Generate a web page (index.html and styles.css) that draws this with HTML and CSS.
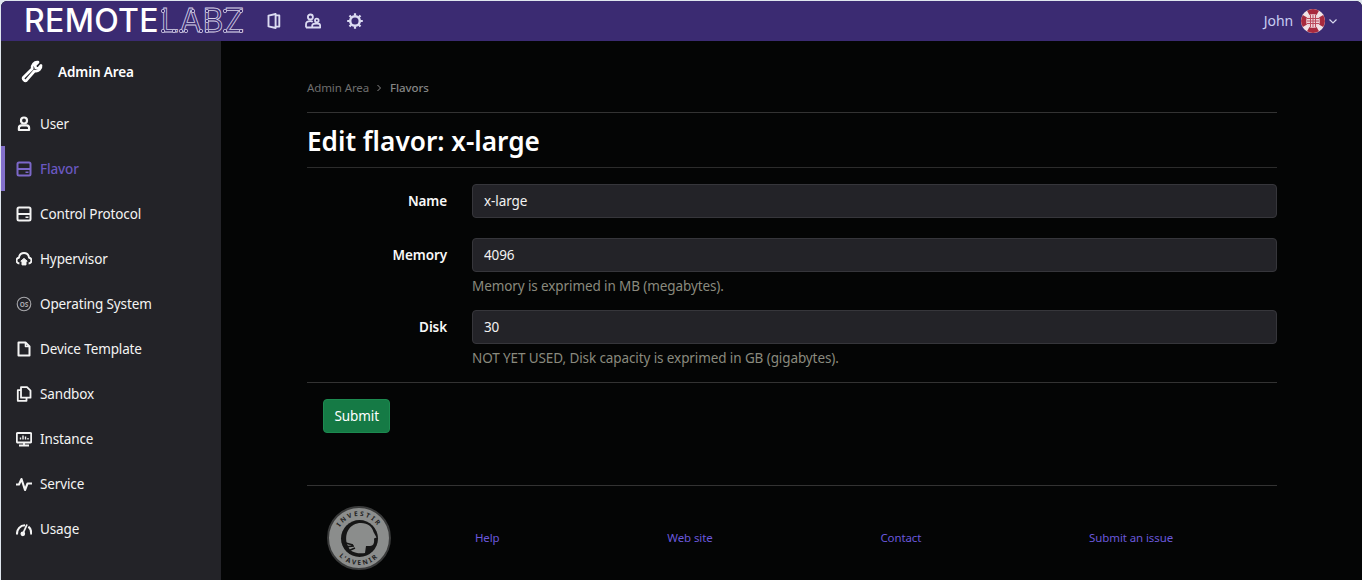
FILE: index.html
```html
<!DOCTYPE html>
<html lang="en">
<head>
    <meta charset="UTF-8">
    <meta name="viewport" content="width=device-width, initial-scale=1.0">
    <title>Edit flavor: x-large</title>
    <link rel="stylesheet" href="styles.css">
</head>
<body>
    <div class="app">
        <header class="topbar">
            <a class="brand" href="#">
                <span class="brand-solid">REMOTE</span><span class="brand-outline">LABZ</span>
                <svg class="brand-nodes" width="90" height="40" viewBox="0 0 90 40">
                    <circle cx="3" cy="10" r="1.700"/><circle cx="3" cy="30" r="1.700"/><circle cx="14" cy="30" r="1.700"/><circle cx="21" cy="30" r="1.700"/>
                    <circle cx="33" cy="10" r="1.700"/><circle cx="26" cy="30" r="1.700"/><circle cx="41" cy="30" r="1.700"/>
                    <circle cx="47" cy="10" r="1.700"/><circle cx="47" cy="20" r="1.700"/><circle cx="47" cy="30" r="1.700"/>
                    <circle cx="65" cy="10" r="1.700"/><circle cx="81" cy="10" r="1.700"/><circle cx="65" cy="30" r="1.700"/><circle cx="81" cy="30" r="1.700"/>
                </svg>
            </a>
            <nav class="top-nav">
                <a href="#"><svg width="16" height="16" viewBox="0 0 16 16" fill="none" stroke="currentColor" stroke-width="1.900" stroke-linejoin="round"><path d="M2.500 2.600 9.600 1v14l-7.100-1.600zM9.600 2.400h3.700v11.200H9.600"/></svg></a>
                <a href="#"><svg width="16" height="16" viewBox="0 0 16 16" fill="none" stroke="currentColor" stroke-width="1.800" stroke-linejoin="round"><circle cx="5.400" cy="4" r="2.500"/><circle cx="11.800" cy="7.400" r="1.800"/><path d="M1 14.500v-3.100c0-2 1.600-3.200 4.400-3.200 1 0 1.800.2 2.400.5M7.200 14.500v-1.700c0-1.500 1.500-2.300 4.400-2.300s3.600.8 3.600 2.300v1.700zM1 14.500h6.200"/></svg></a>
                <a href="#"><svg width="16" height="16" viewBox="0 0 16 16" fill="none" stroke="currentColor"><circle cx="8" cy="8" r="4.800" stroke-width="2.500"/><path d="M8 .2v2.400M8 13.400v2.400M.2 8h2.400M13.400 8h2.400M2.500 2.500l1.700 1.700M11.800 11.800l1.700 1.700M2.500 13.500l1.700-1.700M11.800 4.200l1.700-1.700" stroke-width="2.200"/></svg></a>
            </nav>
            <div class="user-menu">
                <span class="user-name">John</span>
                <svg class="avatar" width="24" height="24" viewBox="0 0 24 24">
                    <circle cx="12" cy="12" r="12" fill="#f1e3e6"/>
                    <g fill="#a82a3e">
                        <path d="M12 12 6 1.800a12 12 0 0 1 12 0z"/>
                        <path d="M12 12 22.200 6a12 12 0 0 1 0 12z"/>
                        <path d="M12 12 18 22.200a12 12 0 0 1-12 0z"/>
                        <path d="M12 12 1.800 18a12 12 0 0 1 0-12z"/>
                    </g>
                    <circle cx="12" cy="12" r="7" fill="#efd6da"/>
                    <path d="M9.500 6v12M12 5.500v13M14.500 6v12M6 9.500h12M5.500 12h13M6 14.500h12" stroke="#bb4a5c" stroke-width="1"/>
                </svg>
                <svg class="caret" width="10" height="10" viewBox="0 0 10 10" fill="none" stroke="#d8d8ee" stroke-width="1.200"><path d="m1.500 3.500 3.500 3.500 3.500-3.500"/></svg>
            </div>
        </header>

        <div class="layout">
            <aside class="sidebar">
                <div class="side-head">
                    <svg width="24" height="24" viewBox="0 0 24 24" fill="none" stroke="#fff" stroke-width="2.700" stroke-linejoin="round"><path d="M22 5.500c.6 3.200-2.800 6.600-6.500 5.500L7.600 20.200c-1.500 1.500-4.500-1.200-3-3L13.200 8.700C12.400 5 15.500 1.600 19 2.200l-3 3 .8 2.800 2.600.5z"/></svg>
                    <span>Admin Area</span>
                </div>
                <ul class="side-list">
                    <li><a href="#"><svg width="16" height="16" viewBox="0 0 16 16" fill="none" stroke="currentColor" stroke-width="2.200"><circle cx="8" cy="4.500" r="3"/><path d="M2.900 14v-2c0-1.500 1.100-2.600 2.600-2.600h5c1.500 0 2.600 1.100 2.600 2.600v2z" stroke-linejoin="round"/></svg>User</a></li>
                    <li class="active"><a href="#"><svg width="16" height="16" viewBox="0 0 16 16" fill="none" stroke="currentColor" stroke-width="2"><rect x="1.500" y="1.500" width="13" height="13" rx="1.500"/><path d="M1.500 8h13"/><path d="M9.500 11.200h3" stroke-width="1.600"/></svg>Flavor</a></li>
                    <li><a href="#"><svg width="16" height="16" viewBox="0 0 16 16" fill="none" stroke="currentColor" stroke-width="2"><rect x="1.500" y="1.500" width="13" height="13" rx="1.500"/><path d="M1.500 8h13"/><path d="M9.500 11.200h3" stroke-width="1.600"/></svg>Control Protocol</a></li>
                    <li><a href="#"><svg width="16" height="16" viewBox="0 0 16 16" fill="none" stroke="currentColor" stroke-width="1.900" stroke-linejoin="round"><path d="M3.400 12.500C1.600 12.300.5 11 .5 9.500c0-1.400 1-2.600 2.500-2.800C3.300 4 5.300 2 8 2s4.700 2 5 4.700c1.500.2 2.500 1.400 2.500 2.800 0 1.500-1.100 2.800-2.900 3"/><path d="M4.800 10.200 8 7.400l3.200 2.800H10v3.700H6v-3.700z" fill="currentColor" stroke-width="1"/></svg>Hypervisor</a></li>
                    <li><a href="#"><svg width="16" height="16" viewBox="0 0 16 16" fill="none"><circle cx="8" cy="8" r="6.800" stroke="#a8a8ac" stroke-width="1.100"/><text class="os-mark" x="8" y="10.500">OS</text></svg><span>Operating System</span></a></li>
                    <li><a href="#"><svg width="16" height="16" viewBox="0 0 16 16" fill="none" stroke="currentColor" stroke-width="2" stroke-linejoin="round"><path d="M2.500 1.500h7l4 4v9h-11z"/><path d="M9.500 1.500v4h4" stroke-width="1.600"/></svg>Device Template</a></li>
                    <li><a href="#"><svg width="16" height="16" viewBox="0 0 16 16" fill="none" stroke="currentColor" stroke-width="1.800" stroke-linejoin="round"><path d="M5 1.200h6l3.500 3.500v7H5z"/><path d="M5 4.200H1.800v10.600h8.700v-3"/></svg>Sandbox</a></li>
                    <li><a href="#"><svg width="16" height="16" viewBox="0 0 16 16" fill="none" stroke="currentColor" stroke-width="1.900"><rect x=".8" y="2" width="14.400" height="9.500" rx="1"/><path d="M3 14.500h10M8 11.500v3" stroke-width="1.800"/><path d="M4.500 8.500V6.500M7 8.500V4.500M9.500 8.500V5.500M12 8.500V7" stroke-width="1.400"/></svg>Instance</a></li>
                    <li><a href="#"><svg width="16" height="16" viewBox="0 0 16 16" fill="none" stroke="currentColor" stroke-width="2.100" stroke-linejoin="round"><path d="M0 8.500h3L5.500 3 9 14l2.500-6.500h4.500"/></svg>Service</a></li>
                    <li><a href="#"><svg width="16" height="16" viewBox="0 0 16 16" fill="none" stroke="currentColor" stroke-width="2.100"><path d="M1 13.500C.8 8 4.300 4.400 9 4.300M12.400 5.600c2 1.500 3 4.300 2.800 7.900"/><path d="M6.500 13.500 11 3.500" stroke-width="1.800"/><circle cx="6.800" cy="12.800" r="1.300" fill="currentColor"/></svg>Usage</a></li>
                </ul>
            </aside>

            <main class="main">
                <div class="content">
                    <div class="crumbs">
                        <a href="#">Admin Area</a>
                        <svg width="8" height="8" viewBox="0 0 8 8" fill="none" stroke="#8a8a8a" stroke-width="1"><path d="m2.500 1 3 3-3 3"/></svg>
                        <strong>Flavors</strong>
                    </div>
                    <h1>Edit flavor: x-large</h1>
                    <form class="flavor-form" action="#" method="GET">
                        <div class="field">
                            <label for="name">Name</label>
                            <input type="text" id="name" name="name" value="x-large">
                        </div>
                        <div class="field has-help">
                            <label for="memory">Memory</label>
                            <input type="text" id="memory" name="memory" value="4096">
                            <p class="help">Memory is exprimed in MB (megabytes).</p>
                        </div>
                        <div class="field has-help">
                            <label for="disk">Disk</label>
                            <input type="text" id="disk" name="disk" value="30">
                            <p class="help">NOT YET USED, Disk capacity is exprimed in GB (gigabytes).</p>
                        </div>
                        <div class="actions">
                            <button type="submit">Submit</button>
                        </div>
                    </form>
                    <footer class="footer">
                        <svg class="seal" width="64" height="64" viewBox="0 0 64 64">
                            <defs>
                                <path id="seal-top" d="M10 32a22 22 0 0 1 44 0"/>
                                <path id="seal-bottom" d="M5 32a27 27 0 0 0 54 0"/>
                            </defs>
                            <circle cx="32" cy="32" r="31" fill="#8b8d8c" stroke="#3a3b3b" stroke-width="2"/>
                            <circle cx="32.500" cy="32.500" r="18.500" fill="#161616"/>
                            <path d="M20 38C17 27 23 17 34 17c7 0 11 3.500 12.500 9l3 5.500-2.500 1c.5 3 0 6-2 7-2 .6-4 .6-6 .4l-1 7c-5 1-11 0-15-3z" fill="#8b8d8c"/>
                            <path d="M15 36l11 3M17 41l10-1M21 45l7-3" stroke="#161616" stroke-width="1.500"/>
                            <text class="seal-text"><textPath href="#seal-top" startOffset="50%">INVESTIR</textPath></text>
                            <text class="seal-text"><textPath href="#seal-bottom" startOffset="50%">L'AVENIR</textPath></text>
                        </svg>
                        <div class="footer-links">
                            <a href="#">Help</a>
                            <a href="#">Web site</a>
                            <a href="#">Contact</a>
                            <a href="#">Submit an issue</a>
                        </div>
                    </footer>
                </div>
            </main>
        </div>
    </div>
</body>
</html>
```

FILE: styles.css
```css
* {
    box-sizing: border-box;
}

html, body {
    height: 100%;
}

body {
    font-family: 'Noto Sans', sans-serif;
    font-size: 13.5px;
    letter-spacing: -0.1px;
    line-height: 20px;
    margin: 0;
    padding: 1px 0 0 1px;
    background: #dfe6ee;
    color: #f2f2f2;
    overflow: hidden;
}

a {
    color: inherit;
    text-decoration: none;
}

.app {
    height: 100%;
    display: flex;
    flex-direction: column;
    border-radius: 6px 6px 0 0;
    overflow: hidden;
    background: #040505;
}

/* top bar */
.topbar {
    flex: 0 0 40px;
    display: flex;
    align-items: center;
    background: #3b2b72;
    color: #dcdcf2;
}

.brand {
    position: relative;
    display: flex;
    align-items: center;
    width: 243px;
    padding-left: 23px;
    font-family: 'Inter', sans-serif;
    font-size: 32px;
    letter-spacing: 0;
    line-height: 40px;
    color: #fff;
}

.brand-solid {
    font-weight: 500;
    letter-spacing: 0.3px;
}

.brand-outline {
    margin-left: 2px;
    font-weight: 400;
    letter-spacing: 0.8px;
    color: transparent;
    -webkit-text-stroke: 0.8px #d5d1e8;
}

.brand-nodes {
    position: absolute;
    left: 159px;
    top: 0;
    fill: #3b2b72;
    stroke: #d5d1e8;
    stroke-width: 0.8;
}

.top-nav {
    display: flex;
    align-items: center;
    gap: 23px;
    margin-left: 22px;
}

.top-nav a {
    display: flex;
}

.top-nav a:last-child {
    margin-left: 3px;
}

.user-menu {
    margin-left: auto;
    padding-right: 24px;
    display: flex;
    align-items: center;
    gap: 8px;
}

.user-name {
    font-size: 14px;
    color: #c9cdf2;
}

.caret {
    margin-left: -5px;
}

/* side bar */
.layout {
    flex: 1;
    display: flex;
    min-height: 0;
}

.sidebar {
    flex: 0 0 220px;
    background: #232328;
}

.side-head {
    height: 60px;
    display: flex;
    align-items: center;
    gap: 15px;
    padding: 1px 0 0 18px;
    font-weight: 600;
    color: #fff;
}

.side-list {
    list-style: none;
    margin: 0;
    padding: 0;
    letter-spacing: -0.13px;
}

.side-list a {
    height: 45px;
    display: flex;
    align-items: center;
    gap: 8px;
    padding-left: 15px;
    color: #f4f4f4;
}

.side-list svg {
    flex: none;
}

.side-list .active a {
    color: #6a58c0;
    font-weight: 500;
    border-left: 4px solid #8370cb;
    padding-left: 11px;
}

.side-list .active svg {
    color: #7c68c9;
}

.os-mark {
    font-family: 'Noto Sans', sans-serif;
    font-size: 6.5px;
    font-weight: 700;
    letter-spacing: 0;
    fill: #a8a8ac;
    text-anchor: middle;
}

/* main area */
.main {
    flex: 1;
    min-width: 0;
    padding-left: 1px;
}

.content {
    width: 970px;
    margin: 0 auto;
}

.crumbs {
    height: 72px;
    padding-top: 37px;
    display: flex;
    align-items: flex-start;
    gap: 6px;
    font-size: 11.5px;
    line-height: 20px;
    color: #6e6e6e;
    border-bottom: 1px solid #333;
}

.crumbs svg {
    margin: 6px 1px 0 0;
}

.crumbs strong {
    font-weight: 500;
    color: #858585;
}

h1 {
    margin: 0;
    height: 55px;
    font-size: 26.2px;
    letter-spacing: 0;
    line-height: 56px;
    font-weight: 600;
    color: #fff;
    border-bottom: 1px solid #2c2c2c;
}

.flavor-form {
    padding-top: 16px;
}

.field {
    display: grid;
    grid-template-columns: 165px 1fr;
    margin-bottom: 20px;
}

.field.has-help {
    margin-bottom: 14px;
}

.field label {
    padding-right: 25px;
    text-align: right;
    font-weight: 600;
    line-height: 34px;
    color: #f8f8f8;
}

.field input {
    width: 100%;
    height: 34px;
    padding: 0 11px;
    border: 1px solid #36363b;
    border-radius: 4px;
    background: #232328;
    color: #f2f2f2;
    font: inherit;
    letter-spacing: inherit;
}

.help {
    grid-column: 2;
    margin: 4px 0 0;
    color: #8a8a7e;
}

.actions {
    padding: 16px;
    border-top: 1px solid #333;
}

button {
    display: block;
    height: 34px;
    padding: 0 10.5px;
    border: 1px solid #1c8a50;
    border-radius: 4px;
    background: #157a45;
    color: #fff;
    font: inherit;
    letter-spacing: inherit;
    cursor: pointer;
}

.footer {
    margin-top: 36px;
    padding: 20px 20px 0;
    display: flex;
    align-items: center;
    border-top: 1px solid #333;
}

.seal {
    flex: none;
}

.seal-text {
    font-family: 'Noto Sans', sans-serif;
    font-size: 6.5px;
    font-weight: 700;
    letter-spacing: 2px;
    fill: #222;
    text-anchor: middle;
}

.footer-links {
    flex: 1;
    display: flex;
    justify-content: space-around;
    font-size: 11.5px;
    color: #6a58dc;
}
```
